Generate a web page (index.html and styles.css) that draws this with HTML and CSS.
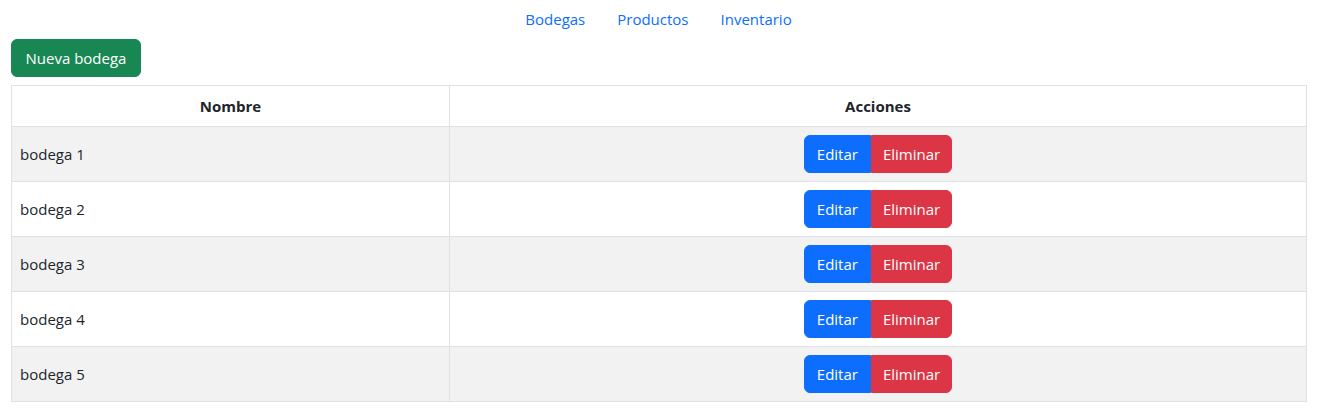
FILE: index.html
```html
<!DOCTYPE html>
<html lang="es">
<head>
<meta charset="utf-8">
<title>Bodegas</title>
<link rel="stylesheet" href="styles.css">
</head>
<body>
<nav class="nav">
  <a class="nav-link" href="#">Bodegas</a>
  <a class="nav-link" href="#">Productos</a>
  <a class="nav-link" href="#">Inventario</a>
</nav>
<main class="page">
  <button class="btn btn-success">Nueva bodega</button>
  <table class="table">
    <thead>
      <tr><th class="col-name">Nombre</th><th>Acciones</th></tr>
    </thead>
    <tbody>
      <tr><td>bodega 1</td><td class="actions"><div class="btn-group"><button class="btn btn-primary">Editar</button><button class="btn btn-danger">Eliminar</button></div></td></tr>
      <tr><td>bodega 2</td><td class="actions"><div class="btn-group"><button class="btn btn-primary">Editar</button><button class="btn btn-danger">Eliminar</button></div></td></tr>
      <tr><td>bodega 3</td><td class="actions"><div class="btn-group"><button class="btn btn-primary">Editar</button><button class="btn btn-danger">Eliminar</button></div></td></tr>
      <tr><td>bodega 4</td><td class="actions"><div class="btn-group"><button class="btn btn-primary">Editar</button><button class="btn btn-danger">Eliminar</button></div></td></tr>
      <tr><td>bodega 5</td><td class="actions"><div class="btn-group"><button class="btn btn-primary">Editar</button><button class="btn btn-danger">Eliminar</button></div></td></tr>
    </tbody>
  </table>
</main>
</body>
</html>
```

FILE: styles.css
```css
* { box-sizing: border-box; }
body {
  margin: 0;
  font-family: "Open Sans", "Noto Sans", sans-serif;
  font-size: 15px;
  line-height: 24px;
  color: #212529;
  background: #fff;
}
.nav {
  display: flex;
  justify-content: center;
  height: 39px;
  align-items: center;
}
.nav-link {
  display: block;
  padding: 6px 16px 8px;
  color: #0d6efd;
  text-decoration: none;
}
.page {
  padding: 0 10px 0 11px;
}
.btn {
  display: inline-block;
  font-family: inherit;
  font-size: 15px;
  line-height: 24px;
  padding: 6px 12px;
  border: 1px solid transparent;
  border-radius: 6px;
  color: #fff;
  cursor: pointer;
}
.btn-success {
  background: #198754;
  border-color: #198754;
  margin-bottom: 8px;
  height: 38px;
  padding: 6px 13.5px;
}
.btn-primary { background: #0d6efd; border-color: #0d6efd; }
.btn-danger { background: #dc3545; border-color: #dc3545; padding: 6px 11px; }
.btn-group { display: inline-flex; }
.btn-group .btn { height: 38px; }
.btn-group .btn:first-child { border-top-right-radius: 0; border-bottom-right-radius: 0; }
.btn-group .btn:last-child { border-top-left-radius: 0; border-bottom-left-radius: 0; }
.table {
  width: 100%;
  border-collapse: collapse;
  border: 1px solid #dee2e6;
}
.table th, .table td {
  border: 1px solid #dee2e6;
  padding: 8px;
  text-align: left;
  vertical-align: middle;
}
.table th {
  text-align: center;
  font-weight: 700;
}
.col-name { width: 438px; }
.table tbody tr:nth-child(odd) td { background: #f2f2f2; }
.table td.actions { text-align: center; }
```
